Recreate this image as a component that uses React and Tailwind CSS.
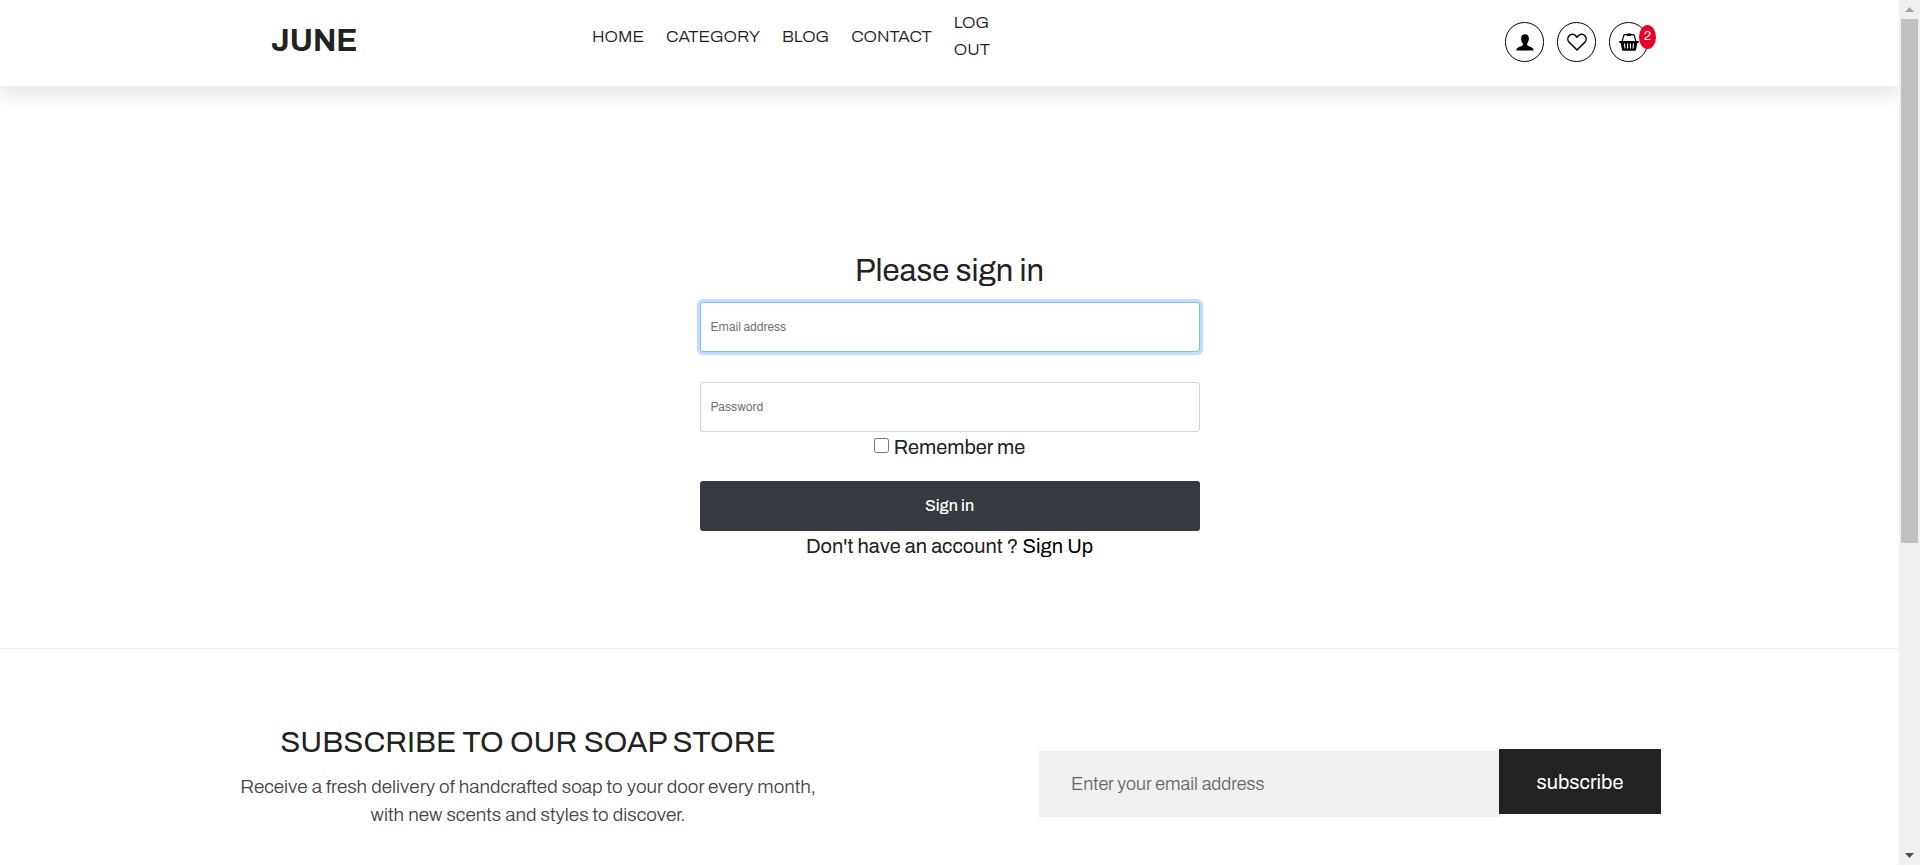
const NAV_LINKS = ["HOME", "CATEGORY", "BLOG", "CONTACT"];

function PersonIcon() {
  return (
    <svg width="18" height="17" viewBox="0 0 18 17" fill="currentColor" aria-hidden="true">
      <path d="M9 .2C6.600.2 5.100 1.800 5.100 4.300c0 1.700.5 3.500 1.400 4.800.6.800.6 2.200-.3 2.700C4.600 12.800.3 13 .3 16.500h17.400c0-3.500-4.300-3.700-5.900-4.700-.9-.5-.9-1.900-.3-2.700.9-1.300 1.400-3.100 1.400-4.800C12.900 1.800 11.400.2 9 .2z" />
    </svg>
  );
}

function HeartIcon() {
  return (
    <svg width="20" height="18" viewBox="0 0 20 18" fill="none" stroke="currentColor" strokeWidth="1.5" strokeLinejoin="round" aria-hidden="true">
      <path d="M10 17L2.200 9.300C.4 7.500.4 4.600 2.100 2.700c1.800-1.900 4.700-1.900 6.400-.1L10 4.200l1.500-1.600c1.700-1.800 4.600-1.800 6.400.1 1.700 1.900 1.700 4.800-.1 6.600z" />
    </svg>
  );
}

function BasketIcon() {
  return (
    <svg width="20" height="18" viewBox="0 0 20 18" fill="none" aria-hidden="true">
      <path d="M3.200 8L4.700 2.700Q5.100 1.700 6.200 1.700h7.600q1.100 0 1.500 1L16.800 8" stroke="currentColor" strokeWidth="1.200" />
      <rect x="7.500" y=".5" width="5" height="2.400" rx="1" fill="currentColor" />
      <path d="M.4 8h19.200v2H18.300l-1.300 6.800q-.2.900-1.200.9H4.200q-1 0-1.200-.9L1.700 10H.4z" fill="currentColor" />
      <path d="M5.500 10.500l.5 5M8.600 10.500v5M11.400 10.500v5M14.500 10.500l-.5 5" stroke="#fff" strokeWidth="1.100" />
    </svg>
  );
}

function RoundLink({ label, children }) {
  return (
    <a href="#" aria-label={label} className="relative flex h-10 w-[39px] items-center justify-center rounded-full border border-black text-black">
      {children}
    </a>
  );
}

function Header() {
  return (
    <header className="relative bg-white shadow-[0_10px_20px_rgba(0,0,0,0.1)]">
      <div className="mx-auto flex h-[86px] max-w-[1423px] items-start">
        <a href="#" className="w-[354px] shrink-0 pt-[17px] pl-[33px] text-[31px] leading-[48px] font-bold">JUNE</a>
        <nav className="flex items-center gap-[22px] pt-[9px] text-[17px] leading-[27px] font-light">
          {NAV_LINKS.map((item) => (
            <a key={item} href="#">{item}</a>
          ))}
          <a href="#" className="w-10">LOG OUT</a>
        </nav>
        <div className="ml-auto flex gap-[13px] pt-[22px] pr-[13px]">
          <RoundLink label="Account"><PersonIcon /></RoundLink>
          <RoundLink label="Wishlist"><HeartIcon /></RoundLink>
          <RoundLink label="Basket">
            <BasketIcon />
            <span className="absolute top-[2px] -right-[9px] flex h-6 w-[17px] items-center justify-center rounded-[50%] bg-[#ea0029] text-[13px] text-white">2</span>
          </RoundLink>
        </div>
      </div>
    </header>
  );
}

function SignIn() {
  const field =
    "block h-[50px] w-full rounded-[3px] border bg-white px-[10px] text-[12px] outline-none placeholder:text-[#6c757d]";
  return (
    <form className="mx-auto flex w-full max-w-[500px] flex-col pt-[166px] pb-[87px] text-center text-[20px] leading-[30px]">
      <h1 className="mb-3 text-[31px] leading-[38px]">Please sign in</h1>
      <input type="email" aria-label="Email address" placeholder="Email address" className={`${field} mb-[30px] border-[#80bdff] shadow-[0_0_0_3px_rgba(0,123,255,0.25)]`} />
      <input type="password" aria-label="Password" placeholder="Password" className={`${field} border-[#ced4da]`} />
      <label className="mb-[19px] flex items-center justify-center gap-[5px]">
        <input type="checkbox" className="mb-1 size-[15px]" />
        Remember me
      </label>
      <button type="button" className="h-[50px] rounded-[3px] bg-[#343a40] text-[16px] font-medium text-white">Sign in</button>
      <p>Don't have an account ? <a href="#" className="text-black">Sign Up</a></p>
    </form>
  );
}

function Subscribe() {
  return (
    <section className="border-t border-[#f0f0f0]">
      <div className="mx-auto flex max-w-[1423px] items-start justify-between pt-[74px]">
        <div className="w-[580px] text-center">
          <h2 className="mb-3 text-[30px] leading-[38px]">SUBSCRIBE TO OUR SOAP STORE</h2>
          <p className="text-[19px] leading-7 font-light text-[#444]">
            Receive a fresh delivery of handcrafted soap to your door every month,
            with new scents and styles to discover.
          </p>
        </div>
        <form className="flex w-[622px] items-start pt-[26px]">
          <input type="email" aria-label="Enter your email address" placeholder="Enter your email address" className="-mr-[2px] mt-[2px] h-[66px] min-w-0 flex-1 bg-[#f0f0f0] px-8 text-[18px] font-light outline-none placeholder:text-[#666]" />
          <button type="button" className="h-[65px] w-[162px] bg-[#222] text-[20px] text-white">subscribe</button>
        </form>
      </div>
    </section>
  );
}

function ScrollRail() {
  return (
    <div aria-hidden="true" className="flex w-[21px] shrink-0 flex-col items-center bg-[#f0f0f0]">
      <svg className="h-[19px] w-[9px] shrink-0" viewBox="0 0 9 19" fill="#a3a3a3"><path d="M0 12L4.500 7L9 12z" /></svg>
      <div className="w-[17px] flex-[524] bg-[#c1c1c1]" />
      <div className="flex-[303]" />
      <svg className="h-[19px] w-[9px] shrink-0" viewBox="0 0 9 19" fill="#505050"><path d="M0 7L4.500 12L9 7z" /></svg>
    </div>
  );
}

export default function App() {
  return (
    <div className="flex h-screen bg-white font-['Archivo','Liberation_Sans',sans-serif] text-[#222]">
      <div className="min-w-0 flex-1 overflow-hidden">
        <Header />
        <main>
          <SignIn />
          <Subscribe />
        </main>
      </div>
      <ScrollRail />
    </div>
  );
}
